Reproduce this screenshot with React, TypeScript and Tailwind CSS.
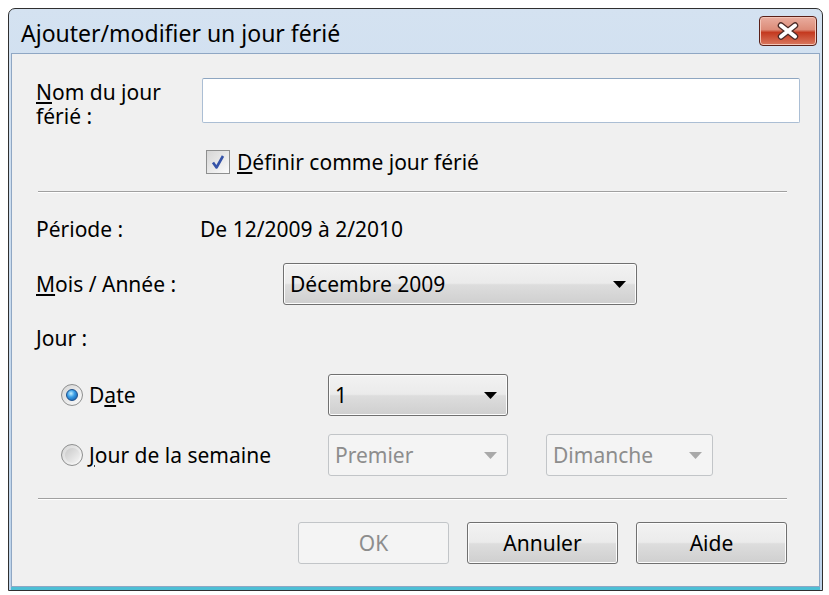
import React from "react";

const font = { fontFamily: '"Noto Sans", "Open Sans", sans-serif' };

function Arrow({ disabled }: { disabled?: boolean }) {
  return (
    <svg width="13" height="7" viewBox="0 0 13 7" className="shrink-0">
      <path d="M0 0h13L6.5 7z" fill={disabled ? "#a9a9a9" : "#000"} />
    </svg>
  );
}

function Combo({ label, width, disabled }: { label: string; width: string; disabled?: boolean }) {
  return (
    <div
      className={
        "flex h-[42px] items-center justify-between rounded-[3px] border pl-[6px] pr-[10px] " +
        width +
        (disabled
          ? " border-[#c2c5c8] bg-[#f4f4f4] text-[#8d8d8d]"
          : " border-[#707070] bg-[linear-gradient(#f2f2f2_0%,#ebebeb_48%,#dddddd_52%,#cfcfcf_100%)] text-black shadow-[inset_0_0_0_1px_#fcfcfc]")
      }
    >
      <span>{label}</span>
      <Arrow disabled={disabled} />
    </div>
  );
}

function Radio({ checked }: { checked?: boolean }) {
  return (
    <span className="flex h-[22px] w-[22px] shrink-0 items-center justify-center rounded-full border border-[#8e8f8f] bg-linear-to-br from-[#d6d6d6] to-[#fbfbfb]">
      {checked ? (
        <span className="h-[12px] w-[12px] rounded-full border border-[#1d4f8a] bg-[radial-gradient(circle_at_40%_35%,#c4f0ff_0%,#3a9ee6_40%,#0b4e9e_100%)]" />
      ) : (
        <span className="h-[15px] w-[15px] rounded-full bg-linear-to-br from-[#c8c8c8] to-[#f6f6f6]" />
      )}
    </span>
  );
}

function Button({ label, disabled }: { label: string; disabled?: boolean }) {
  return (
    <div
      className={
        "flex h-[42px] w-[151px] items-center justify-center rounded-[3px] border " +
        (disabled
          ? "border-[#c2c5c8] bg-[#f4f4f4] text-[#8d8d8d]"
          : "border-[#707070] bg-[linear-gradient(#f2f2f2_0%,#ebebeb_48%,#dddddd_52%,#cfcfcf_100%)] text-black shadow-[inset_0_0_0_1px_#fcfcfc]")
      }
    >
      {label}
    </div>
  );
}

function Separator() {
  return <div className="ml-[2px] mr-[13px] h-[2px] border-t border-b border-t-[#a0a0a0] border-b-white" />;
}

export default function App() {
  return (
    <div className="h-[595px] w-[829px] bg-white pl-[8px] pt-[8px] text-[21px] leading-[28px] text-black" style={font}>
      {/* Window */}
      <div className="flex h-[583px] w-[815px] flex-col rounded-t-[7px] border border-[#2f2f2f] bg-linear-to-b from-[#d4e2f1] to-[#bdd3ea]">
        {/* Title bar */}
        <div className="flex h-[44px] items-center justify-between pl-[12px] pr-[5px]">
          <span className="pt-[4px] text-[23px]">Ajouter/modifier un jour férié</span>
          <div className="flex h-[30px] w-[58px] items-center justify-center rounded-[4px] border border-[#5a2018] bg-[linear-gradient(#e9ad9f_0%,#dc8c79_45%,#c4391f_55%,#d9785f_100%)] shadow-[inset_0_0_0_1px_#f3c5b8]">
            <svg width="22" height="18" viewBox="0 0 22 18">
              <path d="M4 3.5l14 11M18 3.5L4 14.5" stroke="#4b2a26" strokeWidth="6.5" strokeLinecap="round" />
              <path d="M4 3.5l14 11M18 3.5L4 14.5" stroke="#fff" strokeWidth="4" strokeLinecap="round" />
            </svg>
          </div>
        </div>

        {/* Client area */}
        <div className="mx-[2px] flex flex-1 flex-col border-b-[3px] border-[#4dbfd5]">
          <div className="flex flex-1 flex-col border border-[#8fa7c4] bg-[#f0f0f0] pl-[24px] pr-[19px]">
            {/* Nom du jour */}
            <div className="mt-[24px] flex items-start">
              <div className="w-[166px] pt-[2px] leading-[24px]">
                <div>
                  <u>N</u>om du jour
                </div>
                <div>férié :</div>
              </div>
              <div className="h-[45px] flex-1 rounded-[2px] border border-[#abbed4] border-t-[#8ea6c1] bg-white" />
            </div>

            {/* Checkbox */}
            <div className="ml-[170px] mt-[21px] flex h-[26px] items-center gap-[7px]">
              <span className="flex h-[24px] w-[24px] items-center justify-center border border-[#8e8f8f] bg-linear-to-br from-[#d6d6d6] to-[#fbfbfb]">
                <svg width="18" height="18" viewBox="0 0 18 18">
                  <path d="M4 9.5l3.5 5L14 3" stroke="#3553a8" strokeWidth="2.6" fill="none" strokeLinejoin="round" />
                </svg>
              </span>
              <span>
                <u>D</u>éfinir comme jour férié
              </span>
            </div>

            <div className="mt-[16px]">
              <Separator />
            </div>

            {/* Période */}
            <div className="mt-[22px] flex h-[28px] items-center">
              <span className="w-[164px]">Période :</span>
              <span>De 12/2009 à 2/2010</span>
            </div>

            {/* Mois / Année */}
            <div className="mt-[20px] flex items-center">
              <span className="w-[247px]">
                <u>M</u>ois / Année :
              </span>
              <Combo label="Décembre 2009" width="w-[354px]" />
            </div>

            {/* Jour */}
            <div className="mt-[19px] flex h-[28px] items-center">Jour :</div>

            {/* Date */}
            <div className="mt-[22px] flex items-center">
              <div className="flex w-[292px] items-center gap-[6px] pl-[25px]">
                <Radio checked />
                <span>
                  D<u>a</u>te
                </span>
              </div>
              <Combo label="1" width="w-[180px]" />
            </div>

            {/* Jour de la semaine */}
            <div className="mt-[18px] flex items-center">
              <div className="flex w-[292px] items-center gap-[6px] pl-[25px]">
                <Radio />
                <span>
                  <u>J</u>our de la semaine
                </span>
              </div>
              <Combo label="Premier" width="w-[180px]" disabled />
              <div className="ml-[38px]">
                <Combo label="Dimanche" width="w-[167px]" disabled />
              </div>
            </div>

            <div className="mt-[22px]">
              <Separator />
            </div>

            {/* Buttons */}
            <div className="mr-[13px] mt-[22px] flex justify-end gap-[18px]">
              <Button label="OK" disabled />
              <Button label="Annuler" />
              <Button label="Aide" />
            </div>
          </div>
        </div>
      </div>
    </div>
  );
}
